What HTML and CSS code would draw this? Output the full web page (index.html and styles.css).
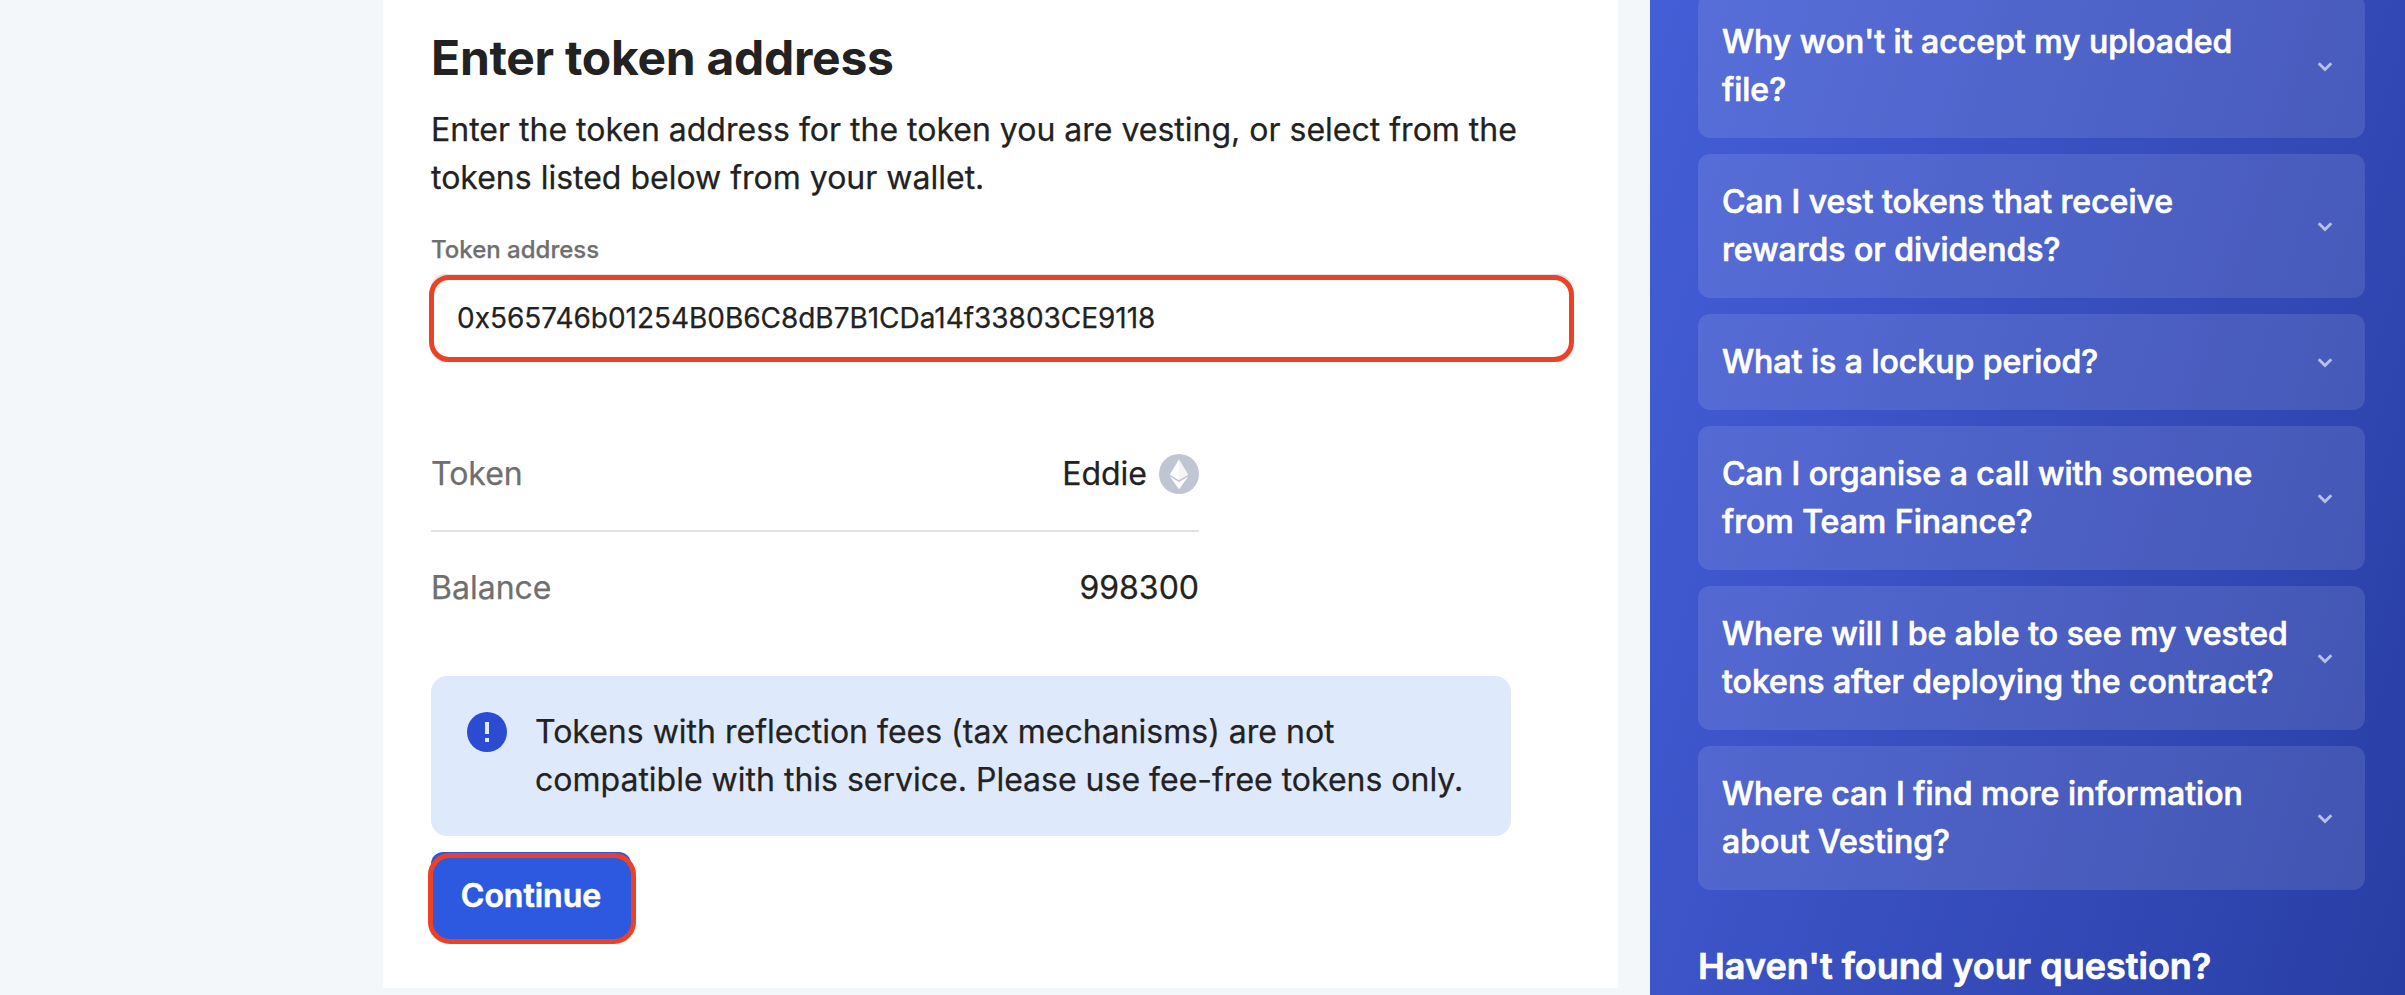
FILE: index.html
```html
<!DOCTYPE html>
<html lang="en">
<head>
<meta charset="utf-8">
<title>Enter token address</title>
<link rel="stylesheet" href="styles.css">
</head>
<body>
<div class="page">
  <main class="card">
    <h1 class="title">Enter token address</h1>
    <p class="lead">Enter the token address for the token you are vesting, or select from the<br>tokens listed below from your wallet.</p>
    <div class="label">Token address</div>
    <div class="field">0x565746b01254B0B6C8dB7B1CDa14f33803CE9118</div>
    <dl class="details">
      <div class="row">
        <dt>Token</dt>
        <dd>Eddie
          <svg class="eth" viewBox="0 0 40 40">
            <circle cx="20" cy="20" r="20" fill="#bfc5d2"/>
            <path d="M20 5.3 10.8 20.8 20 26.2Z" fill="#fff"/>
            <path d="M20 5.3 29.3 20.8 20 26.2Z" fill="#f5f5f5"/>
            <path d="M10.8 22.6 20 28 29.3 22.6 20 35.3Z" fill="#fff"/>
          </svg>
        </dd>
      </div>
      <div class="row">
        <dt>Balance</dt>
        <dd>998300</dd>
      </div>
    </dl>
    <div class="notice">
      <svg class="notice-icon" viewBox="0 0 40 40">
        <circle cx="20" cy="20" r="20" fill="#2b4bd2"/>
        <path d="M18 10h4v12h-4zM18 26h4v4h-4z" fill="#dee9fc"/>
      </svg>
      <p>Tokens with reflection fees (tax mechanisms) are not<br>compatible with this service. Please use fee-free tokens only.</p>
    </div>
    <button class="continue">Continue</button>
  </main>
  <aside class="faq">
    <div class="item"><span>Why won't it accept my uploaded<br>file?</span><svg class="chev" viewBox="0 0 16 10"><path d="M1.7 1.2 8 7.5l6.3-6.3"/></svg></div>
    <div class="item"><span>Can I vest tokens that receive<br>rewards or dividends?</span><svg class="chev" viewBox="0 0 16 10"><path d="M1.7 1.2 8 7.5l6.3-6.3"/></svg></div>
    <div class="item"><span>What is a lockup period?</span><svg class="chev" viewBox="0 0 16 10"><path d="M1.7 1.2 8 7.5l6.3-6.3"/></svg></div>
    <div class="item"><span>Can I organise a call with someone<br>from Team Finance?</span><svg class="chev" viewBox="0 0 16 10"><path d="M1.7 1.2 8 7.5l6.3-6.3"/></svg></div>
    <div class="item"><span>Where will I be able to see my vested<br>tokens after deploying the contract?</span><svg class="chev" viewBox="0 0 16 10"><path d="M1.7 1.2 8 7.5l6.3-6.3"/></svg></div>
    <div class="item"><span>Where can I find more information<br>about Vesting?</span><svg class="chev" viewBox="0 0 16 10"><path d="M1.7 1.2 8 7.5l6.3-6.3"/></svg></div>
    <h2 class="more">Haven't found your question?</h2>
  </aside>
</div>
</body>
</html>
```
FILE: styles.css
```css
* { box-sizing: border-box; margin: 0; padding: 0; }
body {
  height: 995px;
  overflow: hidden;
  background: #f3f7fa;
  color: #222;
  font: 400 32px/48px Inter, "Liberation Sans", sans-serif;
  white-space: nowrap;
  -webkit-text-stroke: .25px currentColor;
}
.page { display: flex; height: 995px; padding-left: 383px; }
.card {
  position: relative;
  z-index: 0;
  width: 1235px;
  height: 988px;
  margin-right: 32px;
  padding: 28px 44px 0 48px;
  background: #fff;
  flex: none;
}
.title { font-size: 48px; line-height: 60px; font-weight: 700; letter-spacing: -.28px; -webkit-text-stroke: 0; }
.lead { margin-top: 18px; }
.label { margin-top: 30px; font-size: 24px; line-height: 36px; font-weight: 500; color: #6f6f6f; }
.field {
  position: relative;
  width: 1145px;
  height: 87px;
  margin: 7px 0 0 -2px;
  padding-left: 23px;
  border: 5px solid #ec4126;
  border-radius: 20px;
  font-size: 28px;
  line-height: 77px;
  letter-spacing: -.03px;
}
.field::before {
  content: "";
  position: absolute;
  z-index: -1;
  inset: -6px -3px -5px -3px;
  border: 2px solid #e2e4e9;
  border-radius: 14px;
}
.details { width: 768px; margin-top: 56px; }
.row { display: flex; justify-content: space-between; align-items: center; height: 114px; }
.row:first-child { border-bottom: 2px solid #e2e2e2; }
.row:last-child { padding-bottom: 2px; }
dt { color: #6f6f6f; }
dd { display: flex; align-items: center; gap: 12px; }
.eth { width: 40px; height: 40px; }
.notice {
  display: flex;
  gap: 28px;
  width: 1080px;
  height: 160px;
  margin-top: 30px;
  padding: 32px 36px;
  border-radius: 16px;
  background: #dee9fc;
}
.notice-icon { width: 40px; height: 40px; margin-top: 4px; flex: none; }
.continue {
  position: relative;
  display: block;
  width: 200px;
  height: 88px;
  margin-top: 16px;
  border: 0;
  border-radius: 12px;
  background: #2c59df;
  color: #fff;
  font: 600 32px/88px Inter, sans-serif;
  -webkit-text-stroke: .6px #fff;
}
.continue::after {
  content: "";
  position: absolute;
  inset: 1px -5px -4px -3px;
  border: 5px solid #ec4126;
  border-radius: 22px;
}
.faq {
  flex: 1;
  display: flex;
  flex-direction: column;
  gap: 16px;
  height: 995px;
  padding: 0 40px 0 48px;
  background: linear-gradient(108deg, #445ed7 0%, #344ab8 63%, #283ea4 100%);
  color: #fff;
  font-weight: 500;
  -webkit-text-stroke: .7px #fff;
}
.item {
  flex: none;
  display: flex;
  justify-content: space-between;
  align-items: center;
  padding: 24px 32px 24px 24px;
  border-radius: 12px;
  background: rgba(255, 255, 255, .11);
}
.item:first-child { margin-top: -6px; }
.chev { width: 16px; height: 10px; margin-top: 2px; fill: none; stroke: #b9c2e6; stroke-width: 2.8; }
.more { margin-top: 36px; font-size: 36px; line-height: 48px; font-weight: 600; }
```
